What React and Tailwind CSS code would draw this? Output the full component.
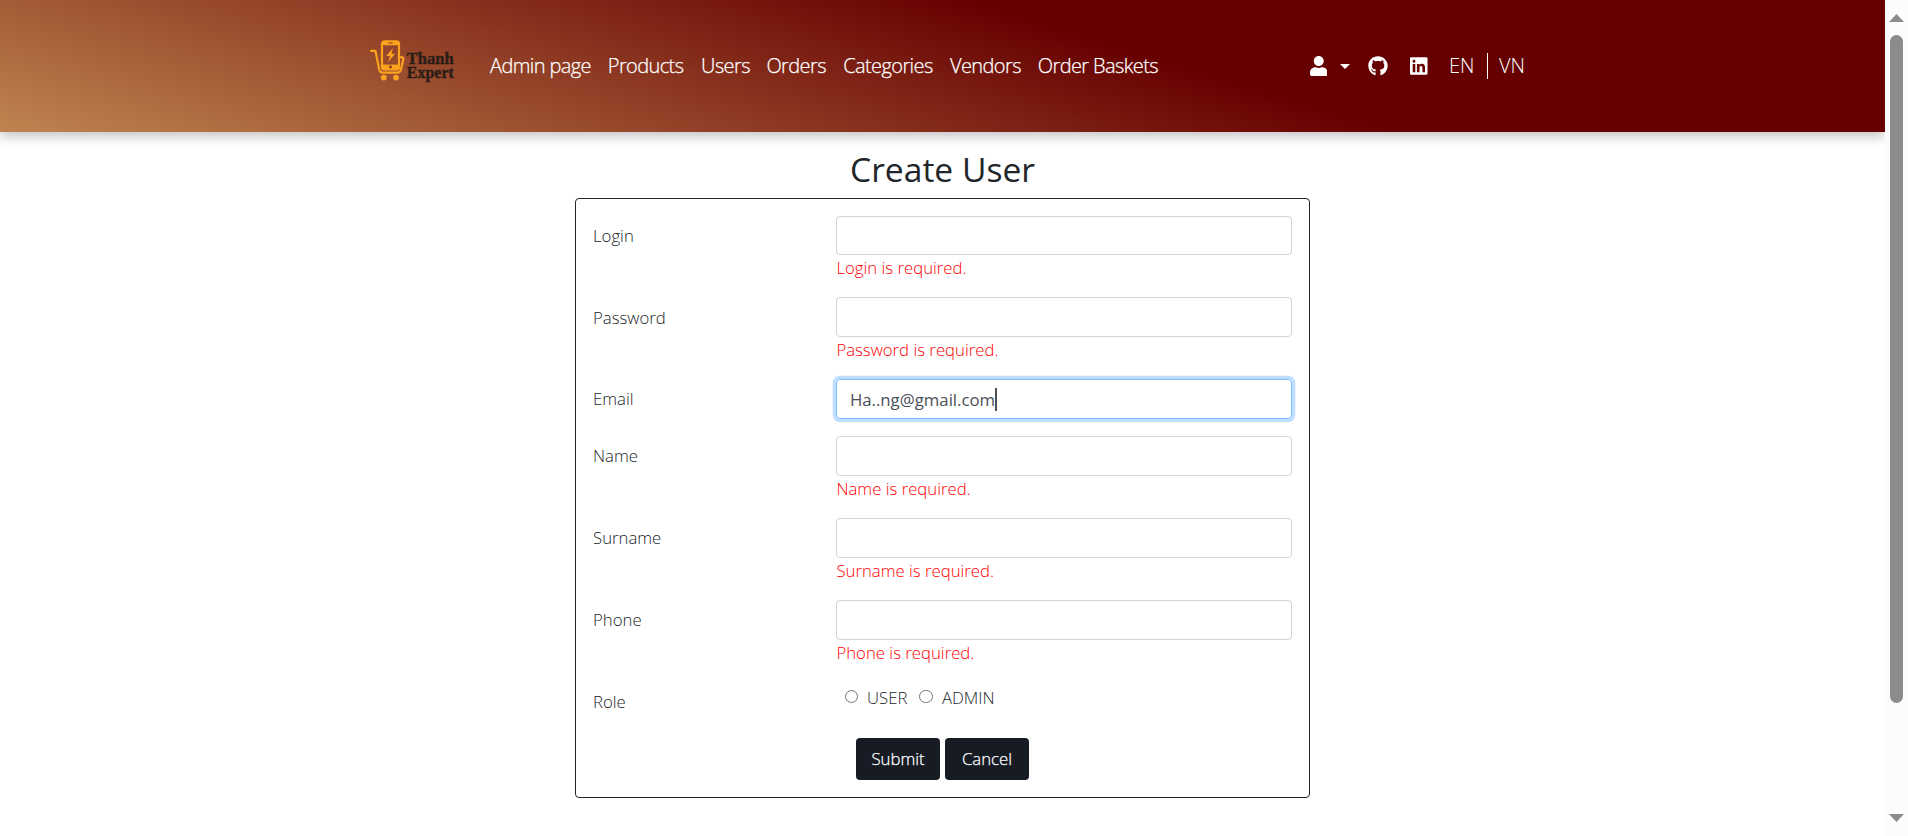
import { FaUser, FaGithub, FaLinkedin } from "react-icons/fa";

const links = [
  { text: "Admin page", w: "w-[101px]" },
  { text: "Products", w: "w-[76.5px]" },
  { text: "Users", w: "w-[48.5px]" },
  { text: "Orders", w: "w-[60px]" },
  { text: "Categories", w: "w-[90px]" },
  { text: "Vendors", w: "w-[71px]" },
  { text: "Order Baskets", w: "w-[121px]" },
];

const fields = [
  { label: "Login", error: "Login is required." },
  { label: "Password", error: "Password is required." },
  { label: "Email", value: "Ha..ng@gmail.com" },
  { label: "Name", error: "Name is required." },
  { label: "Surname", error: "Surname is required." },
  { label: "Phone", error: "Phone is required." },
];

function Logo() {
  return (
    <svg className="h-[44px] w-[88px]" viewBox="0 0 88 44" fill="none">
      <g stroke="#fba21f" strokeLinecap="round" strokeLinejoin="round">
        <path d="M1 10.8H5.4L9.2 29.4Q10 32.6 12.4 32.6H27.6Q30 32.6 30.8 30L33.4 19.2Q33.4 17.2 30.8 17.2" strokeWidth="2.2" />
        <rect x="12" y="1.4" width="17" height="28" rx="2.4" strokeWidth="2.2" />
      </g>
      <rect x="12" y="1.5" width="17" height="3.8" fill="#fba21f" />
      <rect x="12" y="24.6" width="17" height="4.6" fill="#fba21f" />
      <path d="M18.4 3H22.8" stroke="#8a3a20" strokeWidth="1" />
      <circle cx="20.5" cy="27" r="1.4" fill="#8a3a20" />
      <path d="M23 8L16.2 16H20L18.2 22.2L25 13.8H21.4Z" fill="#fba21f" />
      <circle cx="13.8" cy="37.6" r="2.9" fill="#fba21f" />
      <circle cx="26" cy="37.6" r="2.9" fill="#fba21f" />
      <g fontSize="17.5" fontWeight="700" fontFamily="Liberation Serif, serif" fill="#2b1d16" stroke="#2b1d16" strokeWidth="0.4">
        <text x="36.8" y="23.7" textLength="47" lengthAdjust="spacingAndGlyphs">Thanh</text>
        <text x="36.8" y="38" textLength="47" lengthAdjust="spacingAndGlyphs">Expert</text>
      </g>
    </svg>
  );
}

function Header() {
  return (
    <header className="flex h-[132px] items-center bg-[linear-gradient(17deg,#c08450_0%,#660000_60.5%)] pl-[370px] text-[20px] leading-[30px] font-light text-white shadow-[0_4px_12px_rgba(0,0,0,0.25)]">
      <div className="mb-[8px]"><Logo /></div>
      <nav className="ml-[32px] flex gap-[16.8px] tracking-[-0.6px] whitespace-nowrap [-webkit-text-stroke:0.25px_white]">
        {links.map((l) => (
          <a key={l.text} className={l.w}>{l.text}</a>
        ))}
      </nav>
      <div className="ml-[151.2px] flex items-center">
        <FaUser className="h-[20px] w-[17.5px]" />
        <span className="ml-[12.5px] h-0 w-0 border-x-[5px] border-t-[5px] border-x-transparent border-t-white" />
        <FaGithub className="ml-[18.5px] h-[20px] w-[20px]" />
        <FaLinkedin className="ml-[22px] h-[20px] w-[17.5px]" />
        <span className="ml-[21px] w-[26px]">EN</span>
        <span className="ml-[12.5px] h-[26px] w-px bg-white" />
        <span className="ml-[10.5px]">VN</span>
      </div>
    </header>
  );
}

function Field({ label, error, value }) {
  return (
    <div className={error ? "flex h-[81.9px]" : "flex h-[57px]"}>
      <label className="w-[243.4px] pt-[7.2px]">{label}</label>
      <div className="w-[456px]">
        <div
          className={
            value
              ? "flex h-[40px] items-center rounded-[4px] border border-[#80bdff] px-[12.5px] font-normal text-[#495057] shadow-[0_0_0_3.3px_rgba(0,123,255,0.25)]"
              : "h-[39.45px] rounded-[4px] border border-[#ced4da]"
          }
        >
          {value}
          {value && <span className="h-[23px] w-[2px] bg-[#495057]" />}
        </div>
        {error && <p className="text-[#ff0000]">{error}</p>}
      </div>
    </div>
  );
}

function Radio({ label }) {
  return (
    <label className="flex items-center">
      <span className="mb-[2px] h-[13.5px] w-[13.5px] rounded-full border border-[#767676]" />
      <span className="ml-[9px]">{label}</span>
    </label>
  );
}

export default function App() {
  return (
    <div className="flex h-[836px] overflow-hidden bg-white font-['Open_Sans',sans-serif]">
      <div className="w-[1885px] overflow-hidden">
        <Header />
        <main className="flex flex-col items-center pt-[16px] text-[16.75px] leading-[25px] font-light text-[#212529]">
          <h1 className="h-[50px] text-[33.6px] leading-[43px] font-normal">Create User</h1>
          <form className="h-[600px] w-[735px] rounded-[4px] border border-[#212529] pt-[16.5px] pl-[17px]">
            {fields.map((f) => (
              <Field key={f.label} {...f} />
            ))}
            <div className="flex h-[56px]">
              <span className="w-[251.5px] pt-[7px]">Role</span>
              <div className="flex gap-[12px] pt-[3px] pb-[28px]">
                <Radio label="USER" />
                <Radio label="ADMIN" />
              </div>
            </div>
            <div className="ml-[263px] flex gap-[5px] text-white [-webkit-text-stroke:0.25px_white]">
              <button type="button" className="h-[42px] w-[84px] rounded-[4px] bg-[#171b24]">Submit</button>
              <button type="button" className="h-[42px] w-[84px] rounded-[4px] bg-[#171b24]">Cancel</button>
            </div>
          </form>
        </main>
      </div>
      <div className="flex w-[23px] flex-col items-center bg-[#fcfcfc] pt-[14px] pb-[14px]">
        <svg className="h-[8px] w-[15px]" viewBox="0 0 15 8"><path d="M7.5 0L15 8H0Z" fill="#8b8b8b" /></svg>
        <div className="mt-[13px] h-[668px] w-[13px] rounded-full bg-[#8b8b8b]" />
        <svg className="mt-auto h-[8px] w-[15px]" viewBox="0 0 15 8"><path d="M0 0H15L7.5 8Z" fill="#8b8b8b" /></svg>
      </div>
    </div>
  );
}
